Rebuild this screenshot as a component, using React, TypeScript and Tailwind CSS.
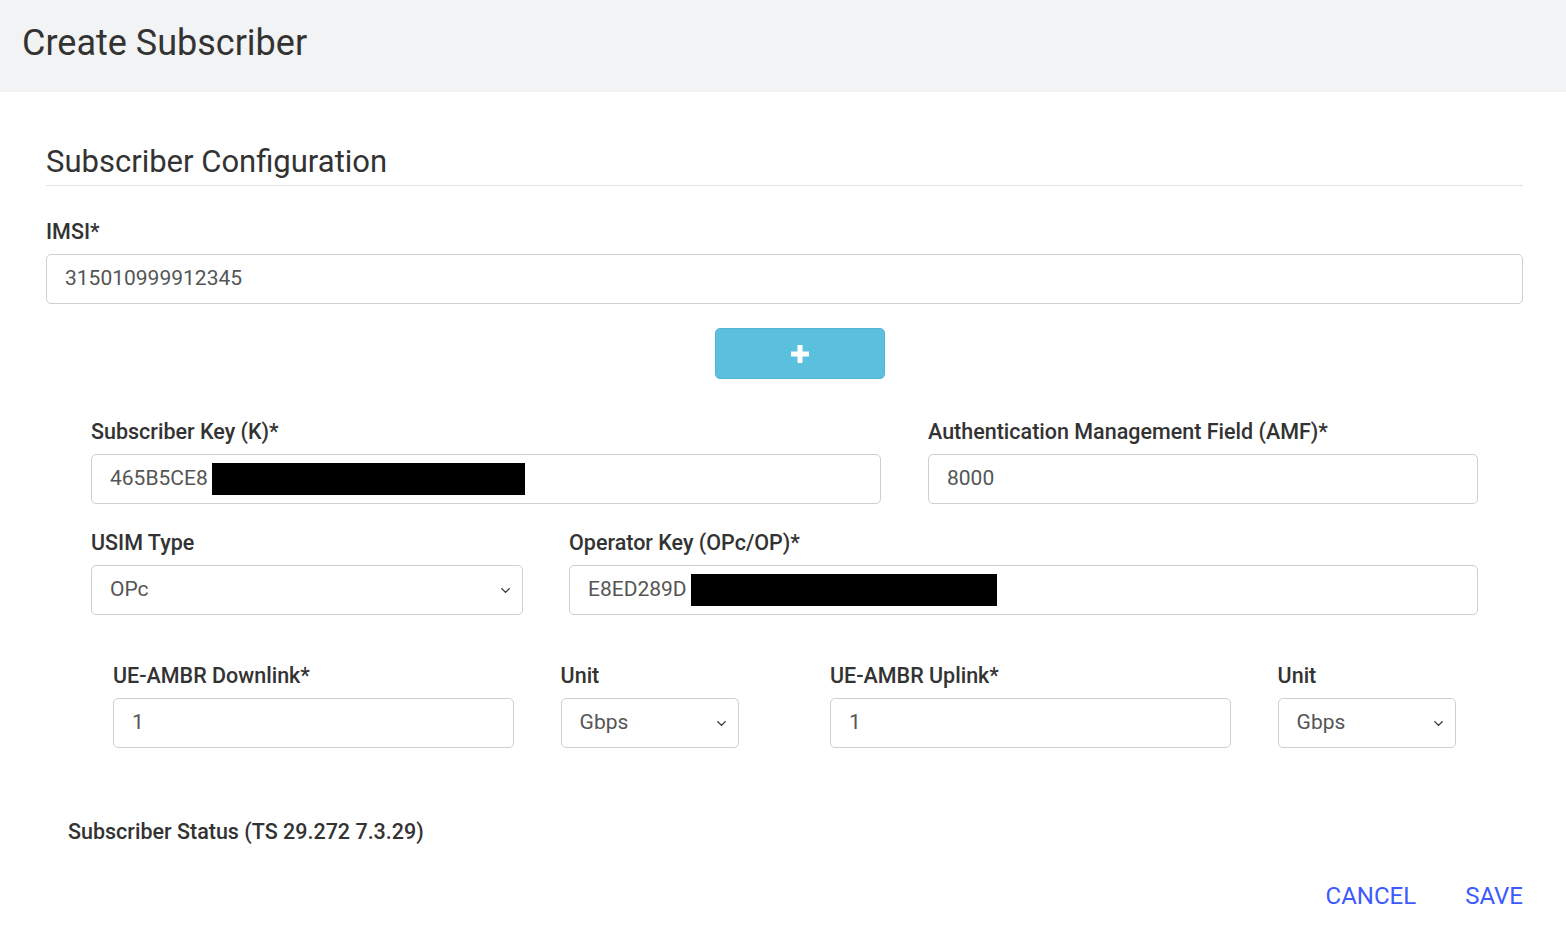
import React from 'react';
import { ChevronDown } from 'lucide-react';

const font = { fontFamily: 'Roboto, "Noto Sans", sans-serif' };

const Label: React.FC<{ children: React.ReactNode }> = ({ children }) => (
  <div className="text-[21.5px] leading-6 font-medium text-[#333] mb-[10px]">{children}</div>
);

const TextBox: React.FC<{ value: string; redact?: number }> = ({ value, redact }) => (
  <div className="h-[50px] border border-[#cfcfcf] rounded-[5px] bg-white flex items-center px-[18px] text-[21px] text-[#555]">
    <span>{value}</span>
    {redact ? <span className="ml-[4px] h-[32px] bg-black" style={{ width: redact }} /> : null}
  </div>
);

const SelectBox: React.FC<{ value: string }> = ({ value }) => (
  <div className="h-[50px] border border-[#cfcfcf] rounded-[5px] bg-white flex items-center justify-between pl-[18px] pr-[9px] text-[21px] text-[#555]">
    <span>{value}</span>
    <ChevronDown size={15} strokeWidth={2.2} className="text-[#333]" />
  </div>
);

const App: React.FC = () => {
  return (
    <div className="min-h-screen bg-white" style={font}>
      <header className="h-[92px] bg-[#f2f3f5] flex items-center px-[22px] pb-[6px]">
        <h1 className="text-[36px] text-[#333] font-normal">Create Subscriber</h1>
      </header>

      <main className="pl-[46px] pr-[43px]">
        <h2 className="pt-[50px] text-[31px] leading-[40px] text-[#333] pb-[3px] border-b border-[#e3e3e3]">
          Subscriber Configuration
        </h2>

        <div className="mt-[34px]">
          <Label>IMSI*</Label>
          <TextBox value="315010999912345" />
        </div>

        <div className="flex justify-center mt-[24px] pl-[30px]">
          <button className="w-[170px] h-[51px] bg-[#5bc0de] border border-[#4fb6d6] rounded-[5px] flex items-center justify-center">
            <svg width="20" height="20" viewBox="0 0 20 20">
              <path d="M10 1v18M1 10h18" stroke="white" strokeWidth="5" />
            </svg>
          </button>
        </div>

        <div className="px-[45px] mt-[41px]">
          <div className="flex gap-[47px]">
            <div className="w-[790px]">
              <Label>Subscriber Key (K)*</Label>
              <TextBox value="465B5CE8" redact={313} />
            </div>
            <div className="flex-1">
              <Label>Authentication Management Field (AMF)*</Label>
              <TextBox value="8000" />
            </div>
          </div>

          <div className="flex gap-[46px] mt-[27px]">
            <div className="w-[432px]">
              <Label>USIM Type</Label>
              <SelectBox value="OPc" />
            </div>
            <div className="flex-1">
              <Label>Operator Key (OPc/OP)*</Label>
              <TextBox value="E8ED289D" redact={306} />
            </div>
          </div>

          <div className="flex mt-[49px] px-[22px]">
            <div className="w-[402px]">
              <Label>UE-AMBR Downlink*</Label>
              <TextBox value="1" />
            </div>
            <div className="w-[179px] ml-[47px]">
              <Label>Unit</Label>
              <SelectBox value="Gbps" />
            </div>
            <div className="w-[402px] ml-[91px]">
              <Label>UE-AMBR Uplink*</Label>
              <TextBox value="1" />
            </div>
            <div className="w-[179px] ml-[47px]">
              <Label>Unit</Label>
              <SelectBox value="Gbps" />
            </div>
          </div>
        </div>

        <div className="mt-[72px] pl-[22px] text-[21.5px] leading-6 font-medium text-[#333]">
          Subscriber Status (TS 29.272 7.3.29)
        </div>

        <div className="flex justify-end gap-[49px] mt-[34px] text-[24px] text-[#3d5afe]">
          <button>CANCEL</button>
          <button>SAVE</button>
        </div>
      </main>
    </div>
  );
};

export default App;
